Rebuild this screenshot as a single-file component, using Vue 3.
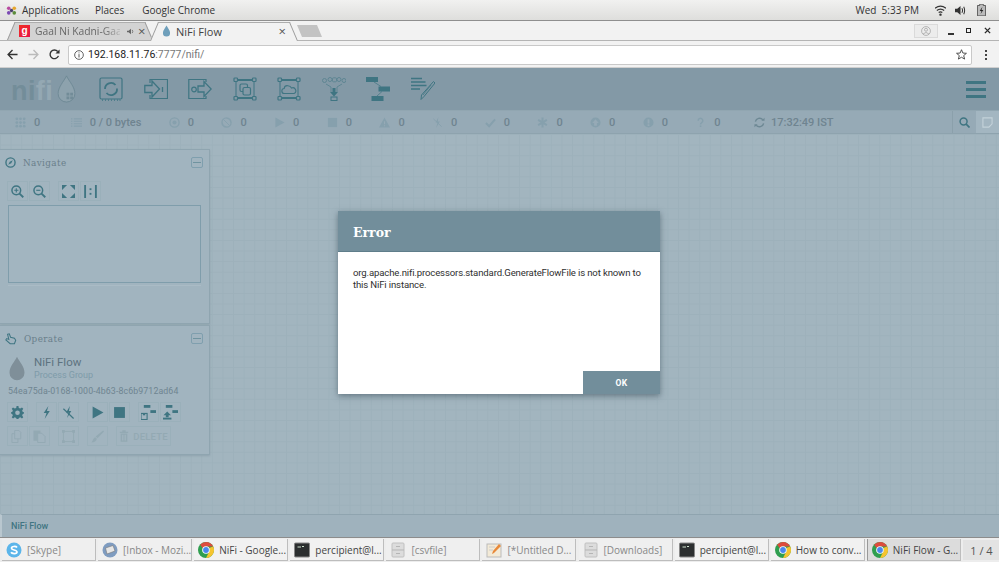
<script setup>
const stats = [
  { icon: 'i-cluster', text: '0' },
  { icon: 'i-list', text: '0 / 0 bytes' },
  { icon: 'i-target', text: '0' },
  { icon: 'i-nosign', text: '0' },
  { icon: 'i-play', text: '0' },
  { icon: 'i-stop', text: '0' },
  { icon: 'i-warn', text: '0' },
  { icon: 'i-boltoff', text: '0' },
  { icon: 'i-check', text: '0' },
  { icon: 'i-star', text: '0' },
  { icon: 'i-up', text: '0' },
  { icon: 'i-info', text: '0' },
  { icon: 'i-q', text: '0' },
]
const tools = ['t-processor','t-input','t-output','t-group','t-remote','t-funnel','t-template','t-label']
const tasks = [
  { icon: 'skype', label: '[Skype]', dim: true },
  { icon: 'mail', label: '[Inbox - Mozi...', dim: true },
  { icon: 'chrome', label: 'NiFi - Google...' },
  { icon: 'term', label: 'percipient@l...' },
  { icon: 'files', label: '[csvfile]', dim: true },
  { icon: 'note', label: '[*Untitled D...', dim: true },
  { icon: 'files', label: '[Downloads]', dim: true },
  { icon: 'term', label: 'percipient@l...' },
  { icon: 'chrome', label: 'How to conv...' },
  { icon: 'chrome', label: 'NiFi Flow - G...', active: true },
]
</script>

<template>
  <div class="screen">
    <svg class="defs" width="0" height="0" aria-hidden="true">
      <symbol id="t-processor" viewBox="0 0 24 24">
        <rect x="1" y="1" width="22" height="21" rx="1.5" fill="none" stroke="currentColor" stroke-width="1.2"/>
        <path d="M6 12a6 6 0 0 1 10.5-4M18 11.5a6 6 0 0 1-10.5 4.5" fill="none" stroke="currentColor" stroke-width="1.8"/>
        <path d="M3 23.2h1M6 23.2h1M9 23.2h1M12 23.2h1M15 23.2h1M18 23.2h1M20.5 23.2h1" stroke="currentColor" stroke-width="1.2"/>
      </symbol>
      <symbol id="t-input" viewBox="0 0 24 24">
        <path d="M6 6V2.500H23.500V21.500H6V18" fill="none" stroke="currentColor" stroke-width="1.2"/>
        <path d="M0.800 8.500H8V4L15.500 12L8 20V15.500H0.800Z" fill="none" stroke="currentColor" stroke-width="1.300"/>
        <path d="M18.500 10V15" stroke="currentColor" stroke-width="1.300"/>
      </symbol>
      <symbol id="t-output" viewBox="0 0 24 24">
        <path d="M18 5V2.500H0.800V21.500H18V19" fill="none" stroke="currentColor" stroke-width="1.2"/>
        <circle cx="6" cy="12.500" r="2.300" fill="none" stroke="currentColor" stroke-width="1.200"/>
        <path d="M10 9H16V4.500L23.200 12L16 19.500V15H10Z" fill="none" stroke="currentColor" stroke-width="1.300"/>
      </symbol>
      <symbol id="t-group" viewBox="0 0 24 24">
        <rect x="3" y="3" width="18" height="18" fill="none" stroke="currentColor" stroke-width="1"/>
        <path d="M5 3H19M5 21H19" stroke="currentColor" stroke-width="1.800"/>
        <g fill="#8399a6" stroke="currentColor" stroke-width="1.200">
          <rect x="1" y="1" width="3.500" height="3.500" rx=".8"/><rect x="19.500" y="1" width="3.500" height="3.500" rx=".8"/>
          <rect x="1" y="19.500" width="3.500" height="3.500" rx=".8"/><rect x="19.500" y="19.500" width="3.500" height="3.500" rx=".8"/>
          <rect x="7" y="7" width="7.500" height="7.500" rx="1.500" fill="none"/><rect x="10" y="10.500" width="7.500" height="7.500" rx="1.500" fill="#8399a6"/>
        </g>
      </symbol>
      <symbol id="t-remote" viewBox="0 0 24 24">
        <rect x="3" y="3" width="18" height="18" fill="none" stroke="currentColor" stroke-width="1"/>
        <path d="M5 3H19M5 21H19" stroke="currentColor" stroke-width="1.800"/>
        <g fill="#8399a6" stroke="currentColor" stroke-width="1.200">
          <rect x="1" y="1" width="3.500" height="3.500" rx=".8"/><rect x="19.500" y="1" width="3.500" height="3.500" rx=".8"/>
          <rect x="1" y="19.500" width="3.500" height="3.500" rx=".8"/><rect x="19.500" y="19.500" width="3.500" height="3.500" rx=".8"/>
        </g>
        <path d="M7.500 16.500a2.500 2.500 0 0 1-.3-5 3.200 3.200 0 0 1 3.500-2.800 4 4 0 0 1 3.800 2.300 2.800 2.800 0 0 1 2.500 5.500Z" fill="none" stroke="currentColor" stroke-width="1.100"/>
      </symbol>
      <symbol id="t-funnel" viewBox="0 0 24 24">
        <g fill="none" stroke="currentColor" stroke-width="1" opacity=".55">
          <circle cx="2.500" cy="3.500" r="2"/><circle cx="8" cy="2.500" r="2"/><rect x="10.500" y="0.800" width="4" height="4" rx="1"/><circle cx="17" cy="2.500" r="2"/><circle cx="22" cy="3.500" r="2"/>
          <path d="M4 7L9 10V15M20 7L15 10V15"/>
        </g>
        <path d="M10.500 11H13.500V15H16L12 19.500L8 15H10.500Z" fill="currentColor"/>
        <rect x="9" y="20" width="6" height="3.500" fill="none" stroke="currentColor" stroke-width="1"/>
      </symbol>
      <symbol id="t-template" viewBox="0 0 24 24">
        <rect x="0" y="0" width="12" height="5" fill="currentColor"/>
        <rect x="12.500" y="9.500" width="11.500" height="5" fill="currentColor"/>
        <rect x="5.500" y="19" width="12" height="5" fill="currentColor"/>
        <path d="M8 5L15 9.500M16 14.500L11 19" stroke="currentColor" stroke-width=".7"/>
      </symbol>
      <symbol id="t-label" viewBox="0 0 24 24">
        <path d="M0 1.500H11M0 5H14.500M0 8.500H15.500M0 12H9" stroke="currentColor" stroke-width="1.500"/>
        <path d="M22.500 4.500L24 6L13 19.500L10 22.500L10.500 18Z" fill="none" stroke="currentColor" stroke-width="1"/>
        <path d="M20 8L12 18" stroke="currentColor" stroke-width=".7"/>
      </symbol>

      <symbol id="i-cluster" viewBox="0 0 12 12">
        <g fill="currentColor"><circle cx="2" cy="2" r="1.500"/><circle cx="6" cy="2" r="1.500"/><circle cx="10" cy="2" r="1.500"/><circle cx="2" cy="6" r="1.500"/><circle cx="6" cy="6" r="1.500"/><circle cx="10" cy="6" r="1.500"/><circle cx="2" cy="10" r="1.500"/><circle cx="6" cy="10" r="1.500"/><circle cx="10" cy="10" r="1.500"/></g>
      </symbol>
      <symbol id="i-list" viewBox="0 0 12 12">
        <path d="M0 2H1.500M3 2H12M0 4.700H1.500M3 4.700H12M0 7.300H1.500M3 7.300H12M0 10H1.500M3 10H12" stroke="currentColor" stroke-width="1.200"/>
      </symbol>
      <symbol id="i-target" viewBox="0 0 12 12">
        <circle cx="6" cy="6" r="5" fill="none" stroke="currentColor" stroke-width="1.500"/><circle cx="6" cy="6" r="2.200" fill="currentColor"/>
      </symbol>
      <symbol id="i-nosign" viewBox="0 0 12 12">
        <circle cx="6" cy="6" r="5" fill="none" stroke="currentColor" stroke-width="1.400"/><path d="M2.500 2.500L9.500 9.500M1.500 6a4.500 4.500 0 0 0 4.500 4.500M6 1.500A4.500 4.500 0 0 1 10.500 6" fill="none" stroke="currentColor" stroke-width="1"/>
      </symbol>
      <symbol id="i-play" viewBox="0 0 12 12"><path d="M1.500 0.500L11.500 6L1.500 11.500Z" fill="currentColor"/></symbol>
      <symbol id="i-stop" viewBox="0 0 12 12"><rect x="1" y="1" width="10" height="10" fill="currentColor"/></symbol>
      <symbol id="i-warn" viewBox="0 0 12 12"><path d="M6 .5L12 11.500H0ZM5.400 4.500V8H6.600V4.500ZM5.400 9V10.200H6.600V9Z" fill-rule="evenodd" fill="currentColor"/></symbol>
      <symbol id="i-boltoff" viewBox="0 0 12 12"><path d="M7 0L4 6H6L4.500 12L8.500 4.800H6.300Z" fill="currentColor"/><path d="M1.500 2L10.500 10.500" stroke="currentColor" stroke-width="1"/></symbol>
      <symbol id="i-check" viewBox="0 0 12 12"><path d="M1 6.500L4.500 10L11 2.500" fill="none" stroke="currentColor" stroke-width="2.200"/></symbol>
      <symbol id="i-star" viewBox="0 0 12 12"><path d="M6 .5V11.500M1.200 3.200L10.800 8.800M10.800 3.200L1.200 8.800" stroke="currentColor" stroke-width="2.200"/></symbol>
      <symbol id="i-up" viewBox="0 0 12 12"><path d="M6 .5a5.500 5.500 0 1 0 0 11a5.500 5.500 0 0 0 0-11ZM6 2.500L9.500 6.500H7.500V9.500H4.500V6.500H2.500Z" fill-rule="evenodd" fill="currentColor"/></symbol>
      <symbol id="i-info" viewBox="0 0 12 12"><path d="M6 .5a5.500 5.500 0 1 0 0 11a5.500 5.500 0 0 0 0-11ZM5 2.500H7V7H5ZM5 8H7V9.800H5Z" fill-rule="evenodd" fill="currentColor"/></symbol>
      <symbol id="i-q" viewBox="0 0 12 12"><path d="M3.500 4a2.500 2.500 0 1 1 4 2C6.500 6.800 6 7.200 6 8.200" fill="none" stroke="currentColor" stroke-width="1.600"/><rect x="5.200" y="9.200" width="1.700" height="1.700" fill="currentColor"/></symbol>
      <symbol id="i-refresh" viewBox="0 0 12 12"><path d="M1.500 5A4.700 4.700 0 0 1 9.600 3M10.500 7A4.700 4.700 0 0 1 2.400 9" fill="none" stroke="currentColor" stroke-width="1.500"/><path d="M8 4.200H11.500V.8ZM4 7.800H.5V11.200Z" fill="currentColor"/></symbol>

      <symbol id="b-zoomin" viewBox="0 0 14 14"><circle cx="5.700" cy="5.700" r="4.700" fill="none" stroke="currentColor" stroke-width="1.600"/><path d="M9.200 9.200L13.200 13.200" stroke="currentColor" stroke-width="2"/><path d="M3.500 5.700H8M5.700 3.500V8" stroke="currentColor" stroke-width="1.200"/></symbol>
      <symbol id="b-zoomout" viewBox="0 0 14 14"><circle cx="5.700" cy="5.700" r="4.700" fill="none" stroke="currentColor" stroke-width="1.600"/><path d="M9.200 9.200L13.200 13.200" stroke="currentColor" stroke-width="2"/><path d="M3.500 5.700H8" stroke="currentColor" stroke-width="1.200"/></symbol>
      <symbol id="b-fit" viewBox="0 0 14 14"><path d="M0 0H5.500L3.500 2L0 5.500ZM14 0V5.500L8.500 0ZM0 14V8.500L5.500 14ZM14 14H8.500L14 8.500Z" fill="currentColor"/></symbol>
      <symbol id="b-actual" viewBox="0 0 14 14"><path d="M1.200 0V14M12.800 0V14" stroke="currentColor" stroke-width="2"/><rect x="6" y="3.500" width="2" height="2" fill="currentColor"/><rect x="6" y="8.500" width="2" height="2" fill="currentColor"/></symbol>
      <symbol id="b-gear" viewBox="0 0 14 14"><path d="M6 0H8L8.400 2.100L10 2.800L11.800 1.600L13.200 3L12 4.800L12.700 6.400L14 6.800V8.200L12.700 8.600L12 10.200L13.200 12L11.800 13.400L10 12.200L8.400 12.900L8 14H6L5.600 12.900L4 12.200L2.200 13.400L.8 12L2 10.200L1.300 8.600L0 8.200V6.800L1.300 6.400L2 4.800L.8 3L2.200 1.600L4 2.800L5.600 2.100ZM7 4.800a2.500 2.500 0 1 0 0 5a2.500 2.500 0 0 0 0-5Z" fill-rule="evenodd" fill="currentColor"/></symbol>
      <symbol id="b-bolt" viewBox="0 0 14 14"><path d="M9 0L4 7.500H7L5 14L10.500 5.500H7.500Z" fill="currentColor"/></symbol>
      <symbol id="b-boltoff" viewBox="0 0 14 14"><path d="M8.500 0L4.500 7H7L5.500 13L10 5.500H7.500Z" fill="currentColor"/><path d="M1.500 3L12.500 13.500" stroke="currentColor" stroke-width="1.300"/></symbol>
      <symbol id="b-savetpl" viewBox="0 0 16 16"><rect x="3" y="0" width="7" height="3" fill="currentColor"/><rect x="10" y="5.500" width="6" height="3" fill="currentColor"/><rect x="0" y="9" width="6.500" height="6.500" fill="none" stroke="currentColor" stroke-width="1.200"/><rect x="2" y="9" width="2.500" height="2" fill="currentColor"/></symbol>
      <symbol id="b-uptpl" viewBox="0 0 16 16"><rect x="3" y="0" width="7" height="3" fill="currentColor"/><rect x="10" y="5.500" width="6" height="3" fill="currentColor"/><path d="M4.500 7L8.500 11H6V13H3V11H.5Z" fill="currentColor"/><rect x="0" y="13.500" width="9" height="2" fill="currentColor"/></symbol>
      <symbol id="b-copy" viewBox="0 0 14 14"><path d="M4 .5H8.500L10.500 2.500V9.500H4ZM1 4H4M1 4V13.500H7.500V9.500" fill="none" stroke="currentColor" stroke-width="1"/></symbol>
      <symbol id="b-paste" viewBox="0 0 14 14"><path d="M0.500 0.500H8V3.500H5V11.500H0.500Z" fill="currentColor"/><path d="M5 3.500H9.500L13 7V13.500H5Z" fill="none" stroke="currentColor" stroke-width="1"/></symbol>
      <symbol id="b-group" viewBox="0 0 14 14"><rect x="1.500" y="1.500" width="11" height="11" fill="none" stroke="currentColor" stroke-width="1"/><rect x="0" y="0" width="3" height="3" fill="currentColor"/><rect x="11" y="0" width="3" height="3" fill="currentColor"/><rect x="0" y="11" width="3" height="3" fill="currentColor"/><rect x="11" y="11" width="3" height="3" fill="currentColor"/></symbol>
      <symbol id="b-brush" viewBox="0 0 14 14"><path d="M13 0.500L14 1.500L7 9L5 7ZM4.500 7.800L6.300 9.500C6 12 3.500 13.500 .5 13.500C2 12 2 9 4.500 7.800Z" fill="currentColor"/></symbol>
      <symbol id="b-trash" viewBox="0 0 12 14"><path d="M1 2H11V3.300H1ZM4 0H8V2H4ZM2 4H10V14H2ZM3.800 5.500V12.500H4.800V5.500ZM5.500 5.500V12.500H6.500V5.500ZM7.200 5.500V12.500H8.200V5.500Z" fill-rule="evenodd" fill="currentColor"/></symbol>
      <symbol id="drop" viewBox="0 0 20 30"><path d="M10 1C13 7 19 13 19 20A9 9 0 0 1 1 20C1 13 7 7 10 1Z"/></symbol>
      <symbol id="chrome" viewBox="0 0 16 16">
        <circle cx="8" cy="8" r="8" fill="#2f9e4f"/>
        <path d="M8 0A8 8 0 0 1 15.200 4.500H8A3.500 3.500 0 0 0 4.900 6.300L2.100 2.700A8 8 0 0 1 8 0Z" fill="#dd4b3e"/>
        <path d="M15.200 4.500A8 8 0 0 1 8 16L11 10A3.500 3.500 0 0 0 11 6Z" fill="#f6c42f"/>
        <circle cx="8" cy="8" r="3.800" fill="#fff"/><circle cx="8" cy="8" r="2.900" fill="#4a87ee"/>
      </symbol>
    </svg>

    <header class="topbar">
      <div class="topbar-left">
        <svg class="apps-logo" viewBox="0 0 12 12" width="11" height="11">
          <circle cx="3" cy="3.500" r="2" fill="#b84aa0"/><circle cx="9" cy="3.500" r="2" fill="#e7a72c"/>
          <circle cx="3" cy="8.500" r="2" fill="#7b4ab3"/><circle cx="9" cy="8.500" r="2" fill="#5c8c3a"/>
          <circle cx="6" cy="6" r="1.800" fill="#4a3f6b"/>
        </svg>
        <span>Applications</span><span class="gap1">Places</span><span class="gap2">Google Chrome</span>
      </div>
      <div class="topbar-right">
        <span>Wed&nbsp;&nbsp;5:33 PM</span>
        <svg class="sys wifi" viewBox="0 0 12 12" width="11" height="11"><path d="M0 3.500Q6-1 12 3.500M2 6Q6 3 10 6M4 8.200Q6 7 8 8.200" fill="none" stroke="#333" stroke-width="1.400"/><circle cx="6" cy="10.500" r="1.300" fill="#333"/></svg>
        <svg class="sys vol" viewBox="0 0 12 12" width="11" height="11"><path d="M0 4H2.500L6 1V11L2.500 8H0Z" fill="#333"/><path d="M7.500 3.500Q9 6 7.500 8.500M9.500 2Q11.500 6 9.500 10" fill="none" stroke="#333" stroke-width="1.100"/></svg>
        <svg class="sys bat" viewBox="0 0 10 13" width="9" height="12"><path d="M3 0H7V1.500H9.500V13H.5V1.500H3Z" fill="#bbb" stroke="#333" stroke-width=".8"/><path d="M6 3L3 7.500H5L4 11L7 6.500H5Z" fill="#222"/></svg>
      </div>
    </header>

    <div class="tabstrip">
      <div class="tab tab-bg">
        <span class="favicon">g</span>
        <span class="tab-title fade">Gaal Ni Kadni-Gaa</span>
        <svg viewBox="0 0 10 8" width="8" height="7" class="speaker"><path d="M0 3H2L5 .5V7.500L2 5H0Z" fill="#666"/><path d="M6.500 2Q8 4 6.500 6" fill="none" stroke="#666" stroke-width="1"/></svg>
        <span class="tab-x">×</span>
      </div>
      <div class="tab tab-active">
        <svg viewBox="0 0 20 30" width="9" height="12" class="tab-drop"><use href="#drop" fill="#6f9fbb"/></svg>
        <span class="tab-title">NiFi Flow</span>
        <span class="tab-x push">×</span>
      </div>
      <div class="newtab"></div>
      <div class="strip-right">
        <span class="profile"><svg viewBox="0 0 12 12" width="10" height="10"><circle cx="6" cy="6" r="5.300" fill="none" stroke="#999" stroke-width=".8"/><circle cx="6" cy="4.500" r="1.800" fill="none" stroke="#999" stroke-width=".8"/><path d="M2.500 9.500Q6 6 9.500 9.500" fill="none" stroke="#999" stroke-width=".8"/></svg></span>
        <i class="wc-min"></i><i class="wc-max"></i>
        <svg viewBox="0 0 8 8" width="7" height="7" class="wc-x"><path d="M1 1L7 7M7 1L1 7" stroke="#2b2b2b" stroke-width="1.600"/></svg>
      </div>
    </div>

    <div class="addrbar">
      <svg class="nav-ic" viewBox="0 0 12 12" width="11" height="11"><path d="M11.500 6H1.500M6 1.200L1.200 6L6 10.800" fill="none" stroke="#333" stroke-width="1.500"/></svg>
      <svg class="nav-ic dim" viewBox="0 0 12 12" width="11" height="11"><path d="M.5 6H10.500M6 1.200L10.800 6L6 10.800" fill="none" stroke="#bbb" stroke-width="1.500"/></svg>
      <svg class="nav-ic" viewBox="0 0 12 12" width="11" height="11"><path d="M10.300 7.500A4.700 4.700 0 1 1 9.500 2.800" fill="none" stroke="#333" stroke-width="1.500"/><path d="M7 5H11.500V.5Z" fill="#333"/></svg>
      <div class="omnibox">
        <svg viewBox="0 0 12 12" width="10" height="10" class="info-ic"><circle cx="6" cy="6" r="5.200" fill="none" stroke="#444" stroke-width="1"/><path d="M6 5V9M6 3V4" stroke="#444" stroke-width="1.100"/></svg>
        <span class="host">192.168.11.76</span><span class="rest">:7777/nifi/</span>
        <svg viewBox="0 0 12 12" width="11" height="11" class="star"><path d="M6 .8L7.500 4.400L11.400 4.700L8.400 7.200L9.400 11L6 9L2.600 11L3.600 7.200L.6 4.700L4.500 4.400Z" fill="none" stroke="#444" stroke-width="1"/></svg>
      </div>
      <span class="kebab"><i></i><i></i><i></i></span>
    </div>

    <div class="nifi-header">
      <div class="logo">
        <span class="logo-text"><b>ni</b><em>fi</em></span>
        <svg viewBox="0 0 20 30" width="19" height="28" class="logo-drop"><use href="#drop" fill="#8da2ad" stroke="#6e8995" stroke-width="1"/><g fill="#728c98"><rect x="10" y="19" width="3" height="3"/><rect x="14" y="19" width="3" height="3"/><rect x="10" y="23" width="3" height="3"/><rect x="14" y="23" width="3" height="3"/></g></svg>
      </div>
      <div class="toolset">
        <svg v-for="t in tools" :key="t" class="tool" width="24" height="24"><use :href="'#' + t"/></svg>
      </div>
      <span class="burger"><i></i><i></i><i></i></span>
    </div>

    <div class="statusbar">
      <div v-for="(s, i) in stats" :key="i" class="stat">
        <svg width="11" height="11"><use :href="'#' + s.icon"/></svg><span>{{ s.text }}</span>
      </div>
      <div class="stat refresh">
        <svg class="refresh-ic" width="11" height="11"><use href="#i-refresh"/></svg><span>17:32:49 IST</span>
      </div>
      <div class="status-actions">
        <span class="search-btn"><svg viewBox="0 0 12 12" width="11" height="11"><circle cx="5" cy="5" r="3.800" fill="none" stroke="currentColor" stroke-width="1.600"/><path d="M7.800 7.800L11.500 11.500" stroke="currentColor" stroke-width="1.800"/></svg></span>
        <span class="note-btn"><svg viewBox="0 0 12 12" width="11" height="11"><path d="M1 1H11V7.500L7.500 11H1Z" fill="none" stroke="#c4d2d9" stroke-width="1.200"/></svg></span>
      </div>
    </div>

    <main class="canvas">
      <aside class="palette">
        <section class="panel nav-panel">
          <div class="panel-head">
            <svg viewBox="0 0 12 12" width="11" height="11" class="head-ic"><circle cx="6" cy="6" r="5" fill="none" stroke="currentColor" stroke-width="1.500"/><path d="M8.500 3.500L6.800 6.800L3.500 8.500L5.200 5.200Z" fill="currentColor"/></svg>
            <span class="panel-title">Navigate</span>
            <span class="collapse"></span>
          </div>
          <div class="btn-row first">
            <span class="btn"><svg width="13" height="13"><use href="#b-zoomin"/></svg></span>
            <span class="btn"><svg width="13" height="13"><use href="#b-zoomout"/></svg></span>
            <span class="btn sep"><svg width="13" height="13"><use href="#b-fit"/></svg></span>
            <span class="btn"><svg width="13" height="13"><use href="#b-actual"/></svg></span>
          </div>
          <div class="birdseye"></div>
          <div class="nav-extra"></div>
        </section>
        <section class="panel op-panel">
          <div class="panel-head">
            <svg viewBox="0 0 14 14" width="12" height="12" class="head-ic"><path d="M3 1.500L5 1L6.500 5L11 6L12.500 8.500L11 12.500H6L1 8L2 6.500L4.500 7.500Z" fill="none" stroke="currentColor" stroke-width="1.200"/></svg>
            <span class="panel-title">Operate</span>
            <span class="collapse"></span>
          </div>
          <div class="selection">
            <svg viewBox="0 0 20 30" width="18" height="25" class="sel-drop"><use href="#drop" fill="#7f8f99"/></svg>
            <div>
              <div class="sel-name">NiFi Flow</div>
              <div class="sel-type">Process Group</div>
            </div>
          </div>
          <div class="sel-id">54ea75da-0168-1000-4b63-8c6b9712ad64</div>
          <div class="btn-row">
            <span class="btn"><svg width="13" height="13"><use href="#b-gear"/></svg></span>
            <span class="btn sep"><svg width="13" height="13"><use href="#b-bolt"/></svg></span>
            <span class="btn"><svg width="13" height="13"><use href="#b-boltoff"/></svg></span>
            <span class="btn sep"><svg width="13" height="13"><use href="#i-play"/></svg></span>
            <span class="btn"><svg width="13" height="13"><use href="#i-stop"/></svg></span>
            <span class="btn sep"><svg width="15" height="15"><use href="#b-savetpl"/></svg></span>
            <span class="btn"><svg width="15" height="15"><use href="#b-uptpl"/></svg></span>
          </div>
          <div class="btn-row off">
            <span class="btn"><svg width="13" height="13"><use href="#b-copy"/></svg></span>
            <span class="btn"><svg width="13" height="13"><use href="#b-paste"/></svg></span>
            <span class="btn sep"><svg width="13" height="13"><use href="#b-group"/></svg></span>
            <span class="btn sep"><svg width="13" height="13"><use href="#b-brush"/></svg></span>
            <span class="btn sep delete"><svg width="10" height="12"><use href="#b-trash"/></svg><span>DELETE</span></span>
          </div>
        </section>
      </aside>

      <div class="dialog">
        <div class="dialog-head">Error</div>
        <div class="dialog-body">org.apache.nifi.processors.standard.GenerateFlowFile is not known to this NiFi instance.</div>
        <div class="dialog-foot"><span class="ok">OK</span></div>
      </div>
    </main>

    <div class="breadcrumb"><span>NiFi Flow</span></div>

    <footer class="taskbar">
      <div v-for="(t, i) in tasks" :key="i" class="task" :class="{ dim: t.dim, active: t.active }">
        <svg v-if="t.icon === 'chrome'" width="16" height="16"><use href="#chrome"/></svg>
        <svg v-else-if="t.icon === 'skype'" viewBox="0 0 16 16" width="16" height="16"><circle cx="8" cy="8" r="7.500" fill="#5bb5ea"/><path d="M11 5.500C10 4 5.500 4 5.500 6.300C5.500 8.500 11 7.500 11 10C11 12 6 12 5 10.300" fill="none" stroke="#fff" stroke-width="1.700"/></svg>
        <svg v-else-if="t.icon === 'mail'" viewBox="0 0 16 16" width="16" height="16"><circle cx="8" cy="8" r="7.500" fill="#7f9cc0"/><path d="M3.500 6L11 3.500L13 9L5 12Z" fill="#e6e6e6" stroke="#777" stroke-width=".6"/></svg>
        <svg v-else-if="t.icon === 'term'" viewBox="0 0 16 16" width="16" height="16"><rect x=".5" y="1" width="15" height="14" rx="1" fill="#2c2f30" stroke="#888"/><path d="M3.500 5H7M8 4.500H10" stroke="#cfe3cf" stroke-width="1"/></svg>
        <svg v-else-if="t.icon === 'files'" viewBox="0 0 16 16" width="16" height="16"><rect x="2" y="1" width="12" height="14" rx="1" fill="#dcdcdc" stroke="#c0c0c0"/><path d="M2 8H14M6 4.500H10M6 11.500H10" stroke="#b5b5b5"/></svg>
        <svg v-else viewBox="0 0 16 16" width="16" height="16"><rect x="1" y="2" width="14" height="13" fill="#f3ead7" stroke="#bbb"/><path d="M3 5H9M3 8H7" stroke="#ccc"/><path d="M13 2L15 4L8 11L6 12L7 9Z" fill="#e8893a"/></svg>
        <span class="task-label">{{ t.label }}</span>
      </div>
      <div class="pager">1 / 4</div>
    </footer>
  </div>
</template>

<style>
html, body { margin: 0; padding: 0; overflow: hidden; }
</style>

<style scoped>
.screen { width: 999px; height: 562px; display: flex; flex-direction: column; overflow: hidden; font-family: "Liberation Sans", Arial, sans-serif; background: #a1b4be; }
.defs { position: absolute; width: 0; height: 0; }

.topbar { height: 21px; flex: none; box-sizing: border-box; display: flex; justify-content: space-between; align-items: center; padding: 0 0 0 6px; background: linear-gradient(#f1f1f0, #dededc); border-bottom: 1px solid #8f8f8f; font-family: "Open Sans", sans-serif; font-size: 10px; color: #333; }
.topbar-left { display: flex; align-items: center; }
.apps-logo { margin-right: 5px; }
.gap1 { margin-left: 16px; }
.gap2 { margin-left: 18px; }
.topbar-right { display: flex; align-items: center; padding-right: 13px; }
.sys.wifi { margin-left: 16px; }
.sys.vol { margin-left: 9px; }
.sys.bat { margin-left: 11px; }

.tabstrip { height: 20px; flex: none; box-sizing: border-box; display: flex; align-items: flex-end; background: #f2f2f2; border-bottom: 1px solid #b4b4b4; font-family: "Open Sans", sans-serif; font-size: 11px; padding-left: 7px; }
.tab { position: relative; z-index: 0; height: 18px; box-sizing: border-box; display: flex; align-items: center; flex: none; }
.tab::before, .tab::after { content: ""; position: absolute; top: 0; bottom: 0; width: 55%; z-index: -1; background: var(--tab); border-top: 1px solid #adadad; box-sizing: border-box; }
.tab::before { left: 0; transform-origin: bottom left; transform: skewX(-23deg); border-left: 1px solid #9c9c9c; }
.tab::after { right: 0; transform-origin: bottom right; transform: skewX(23deg); border-right: 1px solid #9c9c9c; }
.tab-bg { --tab: #d3d3d3; width: 146px; padding: 0 6px 0 12px; }
.tab-active { --tab: #f2f2f2; z-index: 1; width: 148px; height: 19px; margin: 0 0 -1px -3px; padding: 0 12px 1px 12px; }
.favicon { width: 11px; height: 12px; flex: none; background: linear-gradient(135deg, #f03020, #e8104a); color: #fff; font: bold 10px/11px "Liberation Sans", sans-serif; text-align: center; margin-right: 5px; }
.tab-title { white-space: nowrap; color: #444; }
.tab-title.fade { width: 85px; color: #666; font-size: 10.300px; -webkit-mask-image: linear-gradient(90deg, #000 80%, rgba(0,0,0,.25)); mask-image: linear-gradient(90deg, #000 80%, rgba(0,0,0,.25)); }
.speaker { margin-left: 7px; flex: none; }
.tab-x { margin-left: 3px; font-size: 13px; line-height: 12px; color: #555; }
.tab-x.push { margin-left: auto; }
.tab-drop { margin-right: 5px; flex: none; }
.newtab { width: 25px; height: 12px; margin: 0 0 3px -1px; background: #c3c3c3; clip-path: polygon(0 0, 20px 0, 100% 100%, 5px 100%); flex: none; }
.strip-right { margin-left: auto; align-self: center; display: flex; align-items: center; padding-right: 8px; }
.profile { width: 22px; height: 12px; border: 1px solid #dadada; background: #ececec; display: flex; align-items: center; justify-content: center; }
.wc-min { width: 6px; height: 2px; background: #333; margin: 6px 0 0 10px; }
.wc-max { width: 3px; height: 3px; border: 1.500px solid #222; margin-left: 12px; }
.wc-x { margin-left: 13px; }

.addrbar { height: 27px; flex: none; box-sizing: border-box; display: flex; align-items: center; background: #f2f2f2; border-bottom: 1px solid #cfcfcf; padding: 1px 0 0 7px; }
.nav-ic { margin-right: 10px; flex: none; }
.omnibox { width: 904px; height: 20px; box-sizing: border-box; flex: none; margin-left: -2px; background: #fff; border: 1px solid #c9c9c9; border-radius: 2px; display: flex; align-items: center; padding: 0 4px 0 5px; font-family: Roboto, sans-serif; font-size: 10.500px; }
.info-ic { margin-right: 4px; }
.host { color: #222; }
.rest { color: #777; }
.star { margin-left: auto; }
.kebab { display: flex; flex-direction: column; gap: 2px; margin-left: 13px; }
.kebab i { width: 2px; height: 2px; background: #444; }

.nifi-header { height: 42px; flex: none; display: flex; align-items: center; background: #8399a6; position: relative; }
.logo { width: 99px; flex: none; padding-left: 11px; box-sizing: border-box; display: flex; align-items: center; }
.logo-text { font-family: "Liberation Sans", sans-serif; font-weight: 700; font-size: 27px; letter-spacing: .4px; line-height: 27px; margin-top: 4px; }
.logo-text b { color: #738d99; font-weight: 700; }
.logo-text em { color: #94a8b3; font-style: normal; }
.logo-drop { margin-left: 4px; }
.toolset { display: flex; gap: 20.500px; color: #3f7582; }
.tool { flex: none; }
.burger { margin-left: auto; margin-right: 13px; display: flex; flex-direction: column; gap: 4px; }
.burger i { width: 20px; height: 3px; background: #3f7582; display: block; }

.statusbar { height: 24px; flex: none; box-sizing: border-box; display: flex; align-items: center; gap: 27.400px; padding-left: 15px; background: #96aab6; border-top: 1px solid #91a6b1; border-bottom: 1px solid #8ea3ae; font-family: Roboto, sans-serif; font-weight: 500; font-size: 11px; color: #6b818d; }
.stat { display: flex; align-items: center; gap: 8px; color: #6f8490; }
.stat:nth-child(2) { margin-left: 3px; }
.stat svg { color: #86a0ad; flex: none; }
.stat .refresh-ic { color: #6d8894; }
.refresh { gap: 6px; margin-left: 6px; }
.status-actions { margin-left: auto; display: flex; align-self: stretch; }
.search-btn { width: 24px; border-left: 1px solid #8ba0ab; display: flex; align-items: center; justify-content: center; color: #3f7582; box-sizing: border-box; }
.note-btn { width: 23px; background: #a3b6c1; display: flex; align-items: center; justify-content: center; }

.canvas { flex: 1; min-height: 0; position: relative; background-color: #a2b5bf; background-image: linear-gradient(#9db1bb 1px, transparent 1px), linear-gradient(90deg, #9db1bb 1px, transparent 1px); background-size: 10.600px 10.600px; }
.palette { padding-top: 15px; width: 210px; display: flex; flex-direction: column; gap: 1px; }
.panel { background: #a1b4bf; border: 1px solid #8fa5b0; border-left: 0; box-shadow: 0 1px 2px #8fa3ae; box-sizing: border-box; }
.nav-panel { height: 175px; }
.op-panel { height: 130px; }
.panel-head { height: 25px; display: flex; align-items: center; padding: 0 6px 0 5px; box-sizing: border-box; }
.head-ic { color: #3f7582; flex: none; }
.panel-title { font-family: "DejaVu Serif", serif; font-size: 8.800px; letter-spacing: .4px; color: #6a7f8b; margin-left: 7px; }
.collapse { margin-left: auto; width: 10px; height: 9px; border: 1px solid #7f9fae; border-radius: 2px; position: relative; box-sizing: content-box; }
.collapse::after { content: ""; position: absolute; left: 1px; right: 1px; top: 4px; height: 1px; background: #6f939f; }
.btn-row { display: flex; padding-left: 7px; gap: 1px; margin-top: 6px; color: #3f7582; }
.btn-row.first { margin-top: 6px; }
.btn-row.off { margin-top: 4px; color: #93a9b3; }
.btn { width: 21px; height: 20px; box-sizing: border-box; border: 1px solid #9ab0ba; display: flex; align-items: center; justify-content: center; flex: none; }
.btn.sep { margin-left: 7px; }
.btn.delete { width: 55px; gap: 4px; font-family: Roboto, sans-serif; font-size: 9.500px; font-weight: 500; color: #93a9b3; letter-spacing: .2px; }
.birdseye { margin: 4px 0 0 8px; width: 193px; height: 78px; box-sizing: border-box; border: 1px solid #7f9dab; background: #a2b5c0; }
.nav-extra { margin: 2px 0 0 8px; width: 193px; border-top: 1px solid #aabbc5; }
.selection { display: flex; align-items: center; gap: 8px; padding: 5px 0 0 8px; }
.sel-drop { flex: none; }
.sel-name { font-family: Roboto, sans-serif; font-weight: 400; font-size: 11.500px; color: #5d7380; line-height: 13px; }
.sel-type { font-family: Roboto, sans-serif; font-size: 9px; color: #7e9ba9; line-height: 12px; }
.sel-id { font-family: Roboto, sans-serif; font-size: 8.800px; color: #6f8591; padding: 5px 0 0 8px; letter-spacing: .1px; line-height: 11px; }
.op-panel .btn-row:not(.off) { margin-top: 5px; }

.dialog { position: absolute; left: 338px; top: 77px; width: 322px; height: 183px; display: flex; flex-direction: column; background: #fff; box-shadow: 0 2px 6px rgba(50, 70, 80, .55); }
.dialog-head { height: 41px; flex: none; box-sizing: border-box; background: #728e9b; border-bottom: 1px solid #5f7d8a; color: #fff; padding: 13px 0 0 15px; font-family: "DejaVu Serif", serif; font-weight: 700; font-size: 12.500px; line-height: 18px; }
.dialog-body { flex: 1; padding: 15px 15px 0; font-family: Roboto, sans-serif; font-size: 9.600px; letter-spacing: -.15px; line-height: 12px; color: #2f2f2f; }
.dialog-foot { height: 23px; flex: none; display: flex; justify-content: flex-end; }
.ok { width: 77px; background: #728e9b; color: #fff; font-family: Roboto, sans-serif; font-weight: 700; font-size: 8.500px; display: flex; align-items: center; justify-content: center; letter-spacing: .3px; }

.breadcrumb { height: 23px; flex: none; box-sizing: border-box; background: #9fb2bd; border-top: 1px solid #8fa4af; padding: 0 0 0 9px; display: flex; align-items: center; font-family: Roboto, sans-serif; font-weight: 500; font-size: 9px; color: #3f7582; border-left: 2px solid #b9c7cf; }

.taskbar { height: 25px; flex: none; box-sizing: border-box; display: grid; grid-template-columns: repeat(10, 94px) 37px; column-gap: 2.100px; padding: 1px 0 0 2px; background: #ededed; border-top: 1px solid #8c8c8c; font-family: "Open Sans", sans-serif; font-size: 10px; color: #444; }
.task { display: flex; align-items: center; gap: 5px; padding-left: 4px; box-sizing: border-box; height: 22px; background: #f1f1f1; border-right: 1px solid #bdbdbd; border-bottom: 1px solid #bdbdbd; white-space: nowrap; }
.task.dim { color: #888; background: #efefef; }
.task.active { background: #dcdcdc; border-left: 1px solid #999; color: #444; }
.task svg { flex: none; }
.pager { background: #e3e3e3; height: 20px; margin-top: 1px; display: flex; align-items: center; justify-content: center; color: #555; font-size: 11px; }
</style>
